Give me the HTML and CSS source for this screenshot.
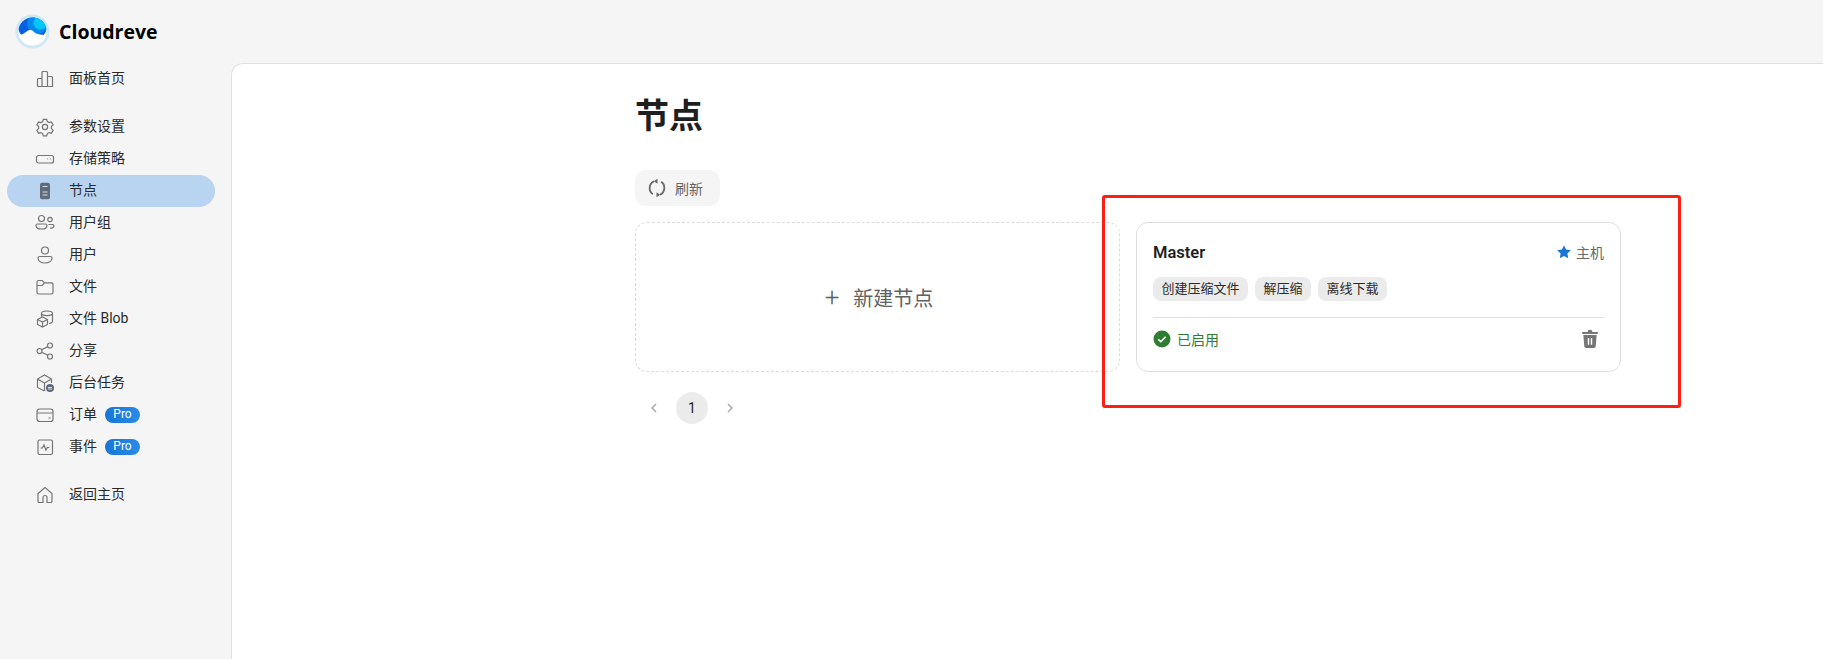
FILE: index.html
```html
<!DOCTYPE html>
<html lang="zh-CN">
<head>
    <meta charset="UTF-8">
    <title>Cloudreve 节点</title>
    <link rel="stylesheet" href="styles.css">
</head>
<body>
    <header class="top-bar">
        <svg class="logo" viewBox="0 0 36 36">
            <defs>
                <clipPath id="logo-clip"><circle cx="18" cy="18" r="14.500"/></clipPath>
            </defs>
            <circle cx="18" cy="18" r="17.5" fill="#cfe8f8"/>
            <g clip-path="url(#logo-clip)">
                <rect x="3" y="3" width="30" height="30" fill="#fff"/>
                <circle cx="18" cy="12" r="15" fill="#0a5fe0"/>
                <circle cx="23" cy="10" r="10.5" fill="#0689ee"/>
                <circle cx="26" cy="9" r="7" fill="#00c8fb"/>
                <path d="M1 22c6 0 8-2 11-4 3-2 5-2 7 0 3 3 6 3 15 4v14H1z" fill="#fff"/>
            </g>
        </svg>
        <span class="brand">Cloudreve</span>
    </header>
    <div class="layout">
        <nav class="sidebar">
            <a class="nav-item">
                <svg class="nav-icon" viewBox="0 0 20 20"><path d="M2.5 17.500v-7a1 1 0 0 1 1-1H7v8M7 17.500v-14a1 1 0 0 1 1-1h3.500a1 1 0 0 1 1 1v14M12.500 7.500h4a1 1 0 0 1 1 1v9H2.500"/></svg>
                <span class="nav-label">面板首页</span>
            </a>
            <div class="nav-group">
                <a class="nav-item">
                    <svg class="nav-icon" viewBox="0 0 20 20"><circle cx="10" cy="10" r="2.600"/><path d="M8.300 2.300h3.400l.6 2.300 1.800 1 2.300-.6 1.700 2.900-1.700 1.700v2l1.700 1.700-1.700 2.900-2.300-.6-1.800 1-.6 2.300H8.300l-.6-2.300-1.800-1-2.300.6-1.700-2.900 1.700-1.700v-2L1.900 7.900l1.700-2.900 2.300.6 1.800-1z"/></svg>
                    <span class="nav-label">参数设置</span>
                </a>
                <a class="nav-item">
                    <svg class="nav-icon" viewBox="0 0 20 20"><rect x="1.500" y="6.500" width="17" height="7.500" rx="2"/><path d="M12.500 9.800h.6M15 9.800h.6"/></svg>
                    <span class="nav-label">存储策略</span>
                </a>
                <a class="nav-item active">
                    <svg class="nav-icon" viewBox="0 0 20 20"><rect class="solid" x="5" y="1.800" width="10" height="16.500" rx="2"/><path class="cut" d="M7.500 5.500h5M7.500 11h5M7.500 14h5"/></svg>
                    <span class="nav-label">节点</span>
                </a>
                <a class="nav-item">
                    <svg class="nav-icon" viewBox="0 0 20 20"><circle cx="6.500" cy="5.500" r="3"/><circle cx="15" cy="6.500" r="2.200"/><path d="M2.500 11h8c1 0 1.500.6 1.500 1.400C12 14.800 9.500 16 6.500 16S1 14.800 1 12.400C1 11.600 1.500 11 2.500 11zM13.500 11.500h4c.9 0 1.500.5 1.500 1.200 0 1.600-1.700 2.500-4 2.500"/></svg>
                    <span class="nav-label">用户组</span>
                </a>
                <a class="nav-item">
                    <svg class="nav-icon" viewBox="0 0 20 20"><circle cx="10" cy="5.500" r="3.500"/><path d="M5 11.500h10c1.200 0 2 .8 2 1.800C17 16.200 13.800 18 10 18s-7-1.800-7-4.700c0-1 .8-1.800 2-1.800z"/></svg>
                    <span class="nav-label">用户</span>
                </a>
                <a class="nav-item">
                    <svg class="nav-icon" viewBox="0 0 20 20"><path d="M2 5a1.500 1.500 0 0 1 1.500-1.500h3.700l2.300 2.300h7a1.500 1.500 0 0 1 1.500 1.500v8.200a1.500 1.500 0 0 1-1.500 1.500h-13A1.500 1.500 0 0 1 2 15.500zM2 8.500h5l2.500-2.700"/></svg>
                    <span class="nav-label">文件</span>
                </a>
                <a class="nav-item">
                    <svg class="nav-icon" viewBox="0 0 20 20"><path d="M2.500 10.500l5-2.500 5 2.500v5l-5 2.500-5-2.500zM2.500 10.500l5 2.500 5-2.500M7.500 13v5M6.500 7.500V4.300C6.500 3 9 2 12 2s5.500 1 5.500 2.300v8c0 1-1.500 1.900-3.500 2.200M6.500 4.300c0 1.300 2.500 2.300 5.500 2.300s5.500-1 5.500-2.300"/></svg>
                    <span class="nav-label">文件 Blob</span>
                </a>
                <a class="nav-item">
                    <svg class="nav-icon" viewBox="0 0 20 20"><circle cx="15" cy="4.500" r="2.500"/><circle cx="15" cy="15.500" r="2.500"/><circle cx="4.500" cy="10" r="2.500"/><path d="M6.700 8.800l6.100-3.200M6.700 11.200l6.100 3.100"/></svg>
                    <span class="nav-label">分享</span>
                </a>
                <a class="nav-item">
                    <svg class="nav-icon" viewBox="0 0 20 20"><path d="M9.500 18L2.500 14.500V6L9.500 2l7 4v4M2.500 6l7 4 7-4M9.500 10v8"/><circle class="solid" cx="15" cy="15" r="4"/><path class="cut" d="M13 14.500h4M13 16h4"/></svg>
                    <span class="nav-label">后台任务</span>
                </a>
                <a class="nav-item">
                    <svg class="nav-icon" viewBox="0 0 20 20"><rect x="2" y="4" width="16" height="12.500" rx="2.500"/><path d="M2 8h16M13.500 13h2"/></svg>
                    <span class="nav-label">订单</span>
                    <span class="pro-badge">Pro</span>
                </a>
                <a class="nav-item">
                    <svg class="nav-icon" viewBox="0 0 20 20"><rect x="3" y="3" width="14.500" height="14.500" rx="1.500"/><path d="M5.500 11h2l1.500-3 2 5 1.300-2.500h2"/></svg>
                    <span class="nav-label">事件</span>
                    <span class="pro-badge">Pro</span>
                </a>
            </div>
            <a class="nav-item">
                <svg class="nav-icon" viewBox="0 0 20 20"><path d="M8 17.500H4a1 1 0 0 1-1-1V8.500l7-6 7 6v8a1 1 0 0 1-1 1h-4v-5a2 2 0 0 0-4 0z"/></svg>
                <span class="nav-label">返回主页</span>
            </a>
        </nav>
        <main class="panel">
            <h1 class="page-title">节点</h1>
            <button class="refresh-btn">
                <svg class="refresh-icon" viewBox="0 0 20 20"><path d="M7 3.300A7.500 7.500 0 0 0 5.800 16.200M13 16.700A7.500 7.500 0 0 0 14.200 3.800"/><path class="arrow" d="M10.500 .8v5L6.800 3.300zM9.500 19.200v-5l3.700 2.500z"/></svg>
                <span>刷新</span>
            </button>
            <div class="card-grid">
                <div class="new-node">
                    <span class="plus">+</span>
                    <span>新建节点</span>
                </div>
                <div class="node-card">
                    <div class="card-head">
                        <span class="node-name">Master</span>
                        <span class="node-role">
                            <svg class="star" viewBox="0 0 20 20"><path d="M10 1.500l2.600 5.500 6 .8-4.400 4.100 1.100 6L10 15l-5.300 2.900 1.100-6L1.400 7.800l6-.8z"/></svg>
                            主机
                        </span>
                    </div>
                    <div class="chip-row">
                        <span class="chip">创建压缩文件</span>
                        <span class="chip">解压缩</span>
                        <span class="chip">离线下载</span>
                    </div>
                    <div class="card-foot">
                        <span class="status">
                            <svg class="status-icon" viewBox="0 0 18 18"><circle cx="9" cy="9" r="8.500"/><path d="M5.300 9.300l2.500 2.400 4.900-4.900"/></svg>
                            已启用
                        </span>
                        <svg class="trash" viewBox="0 0 18 18"><path d="M6.800 2.800a2.200 2.200 0 0 1 4.400 0H16v1.700H2V2.800zM3 5.500h12l-.9 10.200a1.500 1.500 0 0 1-1.500 1.300H5.400a1.500 1.500 0 0 1-1.500-1.300zM7 8v6.200h1.300V8zm2.700 0v6.200H11V8z"/></svg>
                    </div>
                </div>
            </div>
            <div class="pager">
                <svg class="pager-arrow" viewBox="0 0 10 12"><path d="M7 2L3 6l4 4"/></svg>
                <span class="page-num">1</span>
                <svg class="pager-arrow" viewBox="0 0 10 12"><path d="M3 2l4 4-4 4"/></svg>
            </div>
        </main>
    </div>
    <div class="highlight-box"></div>
</body>
</html>
```

FILE: styles.css
```css
html, body {
    height: 100%;
}
body {
    margin: 0;
    background-color: #f5f5f5;
    color: #1f1f1f;
    font-family: Roboto, "Noto Sans CJK SC", sans-serif;
    font-size: 14px;
    display: flex;
    flex-direction: column;
    overflow: hidden;
    position: relative;
}

/* Top bar */
.top-bar {
    height: 63px;
    flex-shrink: 0;
    display: flex;
    align-items: center;
    padding-left: 15px;
    box-sizing: border-box;
}
.logo {
    width: 35px;
    height: 35px;
    margin-right: 9px;
}
.brand {
    font-family: "Open Sans", sans-serif;
    font-size: 19.500px;
    font-weight: 700;
    color: #000;
}

/* Sidebar */
.layout {
    flex: 1;
    display: flex;
    min-height: 0;
}
.sidebar {
    width: 231px;
    flex-shrink: 0;
    box-sizing: border-box;
}
.nav-group {
    margin: 16px 0;
}
.nav-item {
    height: 32px;
    margin: 0 16px 0 7px;
    padding-left: 28px;
    display: flex;
    align-items: center;
    border-radius: 16px;
    font-size: 14px;
    color: #2a2a2a;
}
.nav-item.active {
    background-color: #b9d4f1;
}
.nav-icon {
    width: 20px;
    height: 20px;
    margin-right: 14px;
    flex-shrink: 0;
    fill: none;
    stroke: #757575;
    stroke-width: 1.2;
}
.nav-icon .solid {
    fill: #5f6b7a;
    stroke: none;
}
.nav-icon .cut {
    stroke: #d8dde3;
    stroke-width: 1;
}
.nav-label {
    line-height: 31px;
    height: 32px;
}
.pro-badge {
    margin-left: 8px;
    width: 35px;
    height: 16px;
    line-height: 15px;
    text-align: center;
    border-radius: 8px;
    background: linear-gradient(90deg, #1976d2, #2a8ae8);
    color: #fff;
    font-size: 12px;
}

/* Main panel */
.panel {
    flex: 1;
    background-color: #fff;
    border-left: 1px solid #e0e0e0;
    border-top: 1px solid #e0e0e0;
    border-top-left-radius: 12px;
    padding: 28px 0 0 403px;
    min-width: 0;
}
.page-title {
    margin: 0;
    height: 48px;
    line-height: 48px;
    font-size: 34px;
    font-weight: 700;
    color: #1f1f1f;
}
.refresh-btn {
    margin: 30px 0 0 0;
    height: 36px;
    width: 85px;
    padding: 0 0 0 12px;
    display: flex;
    align-items: center;
    border: 0;
    border-radius: 10px;
    background-color: #f5f5f5;
    color: #666;
    font-family: inherit;
    font-size: 14px;
}
.refresh-icon {
    width: 20px;
    height: 20px;
    margin-right: 8px;
    fill: none;
    stroke: #666;
    stroke-width: 1.800;
}
.refresh-icon .arrow {
    fill: #666;
    stroke: none;
}

.card-grid {
    margin: 16px 0 0 0;
    width: 986px;
    display: grid;
    grid-template-columns: 1fr 1fr;
    gap: 16px;
}
.new-node, .node-card {
    height: 150px;
    box-sizing: border-box;
    border-radius: 12px;
}
.new-node {
    border: 1px dashed #dcdcdc;
    display: flex;
    align-items: center;
    justify-content: center;
    gap: 14px;
    padding-left: 3px;
    color: #616161;
    font-size: 20px;
}
.plus {
    font-size: 26px;
    font-weight: 300;
    line-height: 1;
}
.node-card {
    border: 1px solid #dedede;
    padding: 16px;
    display: flex;
    flex-direction: column;
}
.card-head {
    height: 20px;
    margin-top: 3px;
    display: flex;
    align-items: center;
    justify-content: space-between;
}
.node-name {
    font-size: 16.500px;
    font-weight: 600;
    color: #1f1f1f;
}
.node-role {
    display: flex;
    align-items: center;
    color: #666;
    font-size: 14px;
}
.star {
    width: 16px;
    height: 16px;
    margin-right: 4px;
    fill: #1976d2;
}
.chip-row {
    margin-top: 15px;
    display: flex;
    gap: 7px;
}
.chip {
    height: 24px;
    line-height: 24px;
    padding: 0 8.500px;
    border-radius: 8px;
    background-color: #ebebeb;
    font-size: 13px;
    color: #2a2a2a;
}
.card-foot {
    margin-top: 16px;
    padding-top: 11px;
    border-top: 1px solid #e0e0e0;
    display: flex;
    align-items: center;
    justify-content: space-between;
}
.status {
    display: flex;
    align-items: center;
    color: #2e7d32;
    font-size: 14px;
}
.status-icon {
    width: 18px;
    height: 18px;
    margin-right: 6px;
}
.status-icon circle {
    fill: #2e7d32;
}
.status-icon path {
    fill: none;
    stroke: #fff;
    stroke-width: 1.600;
}
.trash {
    width: 20px;
    height: 20px;
    margin-right: 4px;
    fill: #757575;
    fill-rule: evenodd;
}

/* Pagination */
.pager {
    margin: 20px 0 0 8px;
    display: flex;
    align-items: center;
    gap: 11px;
}
.pager-arrow {
    width: 10px;
    height: 12px;
    margin: 0 6px;
    fill: none;
    stroke: #aaa;
    stroke-width: 1.500;
}
.page-num {
    width: 32px;
    height: 32px;
    line-height: 32px;
    text-align: center;
    border-radius: 50%;
    background-color: #ebebeb;
    font-size: 14px;
}

/* Red annotation drawn over the screenshot */
.highlight-box {
    position: absolute;
    left: 1102px;
    top: 195px;
    width: 579px;
    height: 213px;
    box-sizing: border-box;
    border: 3px solid #fb1f14;
    border-radius: 3px;
}
```
